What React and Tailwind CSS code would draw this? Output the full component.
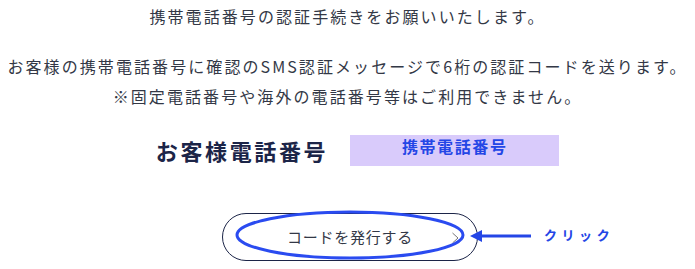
export default function App() {
  return (
    <div
      className="w-[695px] h-[269px] bg-white text-center text-[#333846] overflow-hidden"
      style={{ fontFamily: '"Noto Sans CJK JP", "Noto Sans", sans-serif' }}
    >
      <p className="pt-[1px] text-[16px] leading-[30px] tracking-[0.13em]">
        携帯電話番号の認証手続きをお願いいたします。
      </p>
      <p className="mt-[20px] text-[16px] leading-[30px] tracking-[0.13em]">
        お客様の携帯電話番号に確認のSMS認証メッセージで6桁の認証コードを送ります。
        <br />
        ※固定電話番号や海外の電話番号等はご利用できません。
      </p>

      <div className="mt-[24px] flex items-center justify-center pl-[20px]">
        <h2 className="text-[22px] font-bold leading-[31px] tracking-[0.12em] text-[#1c2548]">
          お客様電話番号
        </h2>
        <div className="ml-[22px] w-[209px] h-[31px] bg-[#d9cbfb] pt-[1px] text-[16px] font-bold leading-[20px] tracking-[0.1em] text-[#2446e6]">
          携帯電話番号
        </div>
      </div>

      <div className="mt-[47px] flex justify-center pl-[5px]">
        <div className="relative">
          <button className="relative w-[256px] h-[48px] rounded-full border border-[#1c2548] bg-white text-[15px] tracking-[0.05em] text-[#333846]">
            コードを発行する
            <svg
              className="absolute right-[17px] top-[18px]"
              width="9"
              height="12"
              viewBox="0 0 9 12"
            >
              <polyline points="1.5,1 7,6 1.5,11" fill="none" stroke="#777" strokeWidth="1" />
            </svg>
          </button>

          <svg
            className="absolute left-[10px] top-[-5px] pointer-events-none"
            width="236"
            height="54"
            viewBox="0 0 236 54"
          >
            <defs>
              <filter id="soft" x="-5%" y="-20%" width="110%" height="140%">
                <feGaussianBlur stdDeviation="0.6" />
              </filter>
            </defs>
            <ellipse
              cx="118"
              cy="27"
              rx="113"
              ry="23"
              fill="none"
              stroke="#2b4cf0"
              strokeWidth="3"
              filter="url(#soft)"
            />
          </svg>

          <svg
            className="absolute left-[247px] top-[15px]"
            width="64"
            height="16"
            viewBox="0 0 64 16"
          >
            <polygon points="1,8 13,2 13,14" fill="#2446e6" />
            <rect x="12" y="6.5" width="50" height="3" fill="#2446e6" />
          </svg>

          <span className="absolute left-[322px] top-[12px] whitespace-nowrap text-[13px] font-bold leading-[20px] tracking-[0.35em] text-[#2446e6]">
            クリック
          </span>
        </div>
      </div>
    </div>
  )
}
